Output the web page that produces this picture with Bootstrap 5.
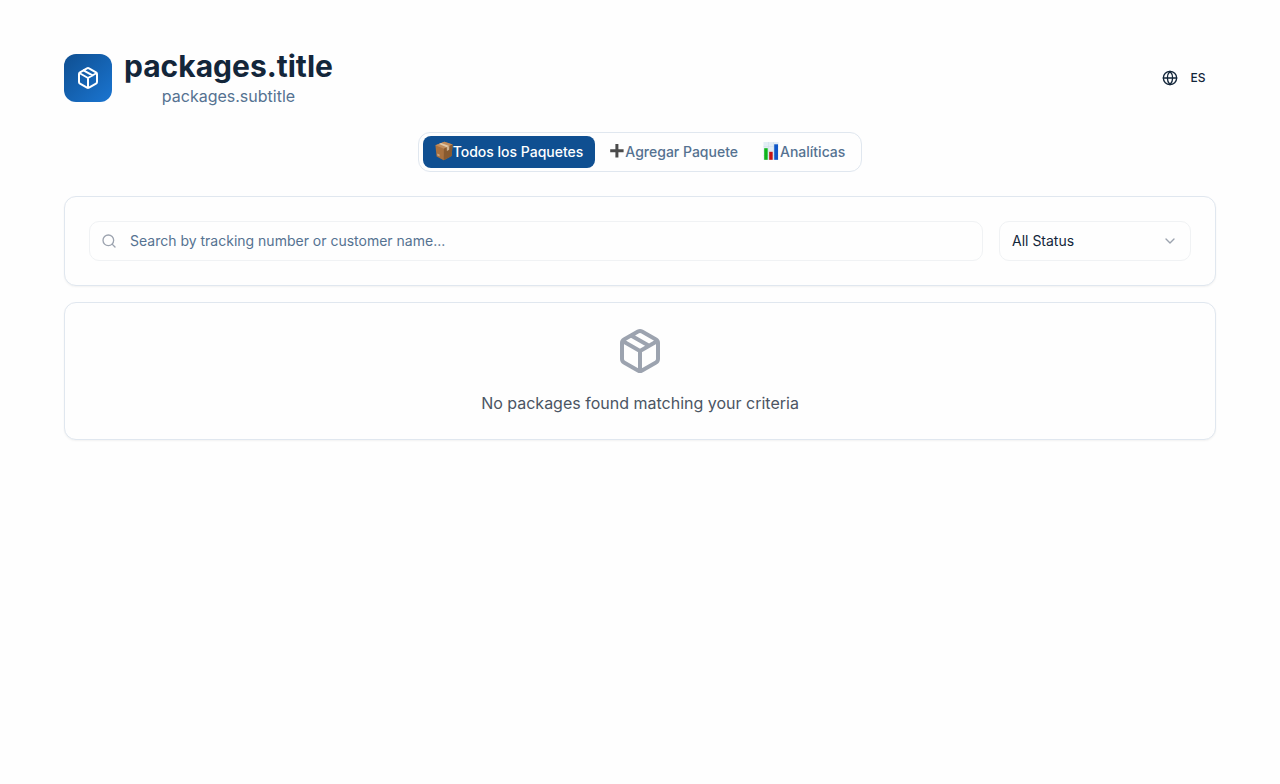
<!DOCTYPE html>
<html lang="es">
<head>
<meta charset="utf-8">
<meta name="viewport" content="width=device-width, initial-scale=1">
<title>packages.title</title>
<link href="https://cdn.jsdelivr.net/npm/bootstrap@5.3.0/dist/css/bootstrap.min.css" rel="stylesheet">
<style>
body{font-family:Inter,sans-serif;background:#fefefe;color:#13263a}
svg{display:block;flex:none}
.line-icon{fill:none;stroke:currentColor;stroke-width:2;stroke-linecap:round;stroke-linejoin:round}
.page{padding:48px 64px}
.brand{gap:12px}
.logo-tile{width:48px;height:48px;border-radius:12px;background:linear-gradient(135deg,#0f4f91,#1a75d1)}
.page-title{font-size:30px;line-height:36px;font-weight:700}
.subtitle{font-size:16px;line-height:24px;color:#557291}
.lang{font-size:12px;line-height:16px;font-weight:500;gap:12px;padding:8px 10.6px;color:#13263a;border:0}
.tabs{height:40px;padding:0 4px;border:1px solid #e0e7ef;border-radius:12px}
.tabs .nav-link{height:32px;padding:0 12px;border-radius:8px;font-size:14px;line-height:20px;font-weight:500;color:#557291}
.tabs .nav-link.active{background:#0f4f91;color:#fff}
.emoji{margin-top:-2px}
.panel{border:1px solid #e0e7ef;border-radius:12px;background:#fefefe;box-shadow:0 1px 2px rgba(0,0,0,.05);padding:24px}
.field{height:40px;border:1px solid #f0f2f4;border-radius:10px;font-size:14px;line-height:20px;padding:0 12px;background:#fefefe}
.field.search{gap:13px;padding-left:11px}
.field input{font-size:14px;line-height:20px;color:#13263a;outline:0}
.field input::placeholder{color:#557291;opacity:1}
.status{width:192px;color:#13263a}
.faint{color:#9ca3af}
.empty-text{font-size:16px;line-height:24px;color:#4b5563}
</style>
</head>
<body>
<svg width="0" height="0" class="position-absolute" aria-hidden="true">
  <symbol id="package" viewBox="0 0 24 24"><path d="m7.5 4.27 9 5.15M21 8a2 2 0 0 0-1-1.73l-7-4a2 2 0 0 0-2 0l-7 4A2 2 0 0 0 3 8v8a2 2 0 0 0 1 1.73l7 4a2 2 0 0 0 2 0l7-4A2 2 0 0 0 21 16ZM3.3 7l8.7 5 8.7-5M12 22V12"/></symbol>
</svg>
<main class="page">
  <header class="d-flex align-items-center justify-content-between">
    <div class="brand d-flex align-items-center">
      <div class="logo-tile d-flex align-items-center justify-content-center text-white"><svg class="line-icon" width="24" height="24"><use href="#package"/></svg></div>
      <div class="text-center">
        <h1 class="page-title mb-0">packages.title</h1>
        <p class="subtitle mb-0">packages.subtitle</p>
      </div>
    </div>
    <button class="lang btn d-flex align-items-center" type="button">
      <svg class="line-icon" width="16" height="16" viewBox="0 0 24 24"><circle cx="12" cy="12" r="10"/><path d="M12 2a14.5 14.5 0 0 0 0 20 14.5 14.5 0 0 0 0-20M2 12h20"/></svg>
      <span>ES</span>
    </button>
  </header>

  <div class="d-flex justify-content-center mt-4">
    <nav class="tabs nav d-inline-flex align-items-center flex-nowrap">
      <a class="nav-link active d-flex align-items-center" href="#">
        <svg class="emoji" width="18" height="20" viewBox="0 0 18 20"><path d="M.4 4.3 9.4.7l8.2 2.7-1 11.5-7.9 4.4-7.1-3.8z" fill="#a9713f"/><path d="m.4 4.3 9-3.6 8.2 2.7-8.7 4.3z" fill="#c08c5c"/><path d="m8.9 7.7 8.7-4.3-1 11.5-7.9 4.4z" fill="#885a30"/><path d="m4 2.9 2-.8 8.3 2.9-2.5 1.2z" fill="#e0c8a8"/><path d="m11.8 6.3 2.5-1.2-.1 3.7-2.3 1.2z" fill="#d0b594"/><path d="m2.2 12.5 2.4 1v1.9l-2.3-1z" fill="#c9a47c"/></svg><span>Todos los Paquetes</span>
      </a>
      <a class="nav-link d-flex align-items-center" href="#">
        <svg class="emoji" width="18" height="18" viewBox="0 0 18 18"><path d="M8.4 2h3v5.3h5.2v3h-5.2v5.2h-3v-5.2H3.2v-3h5.2z" fill="#4b4b4b"/></svg><span>Agregar Paquete</span>
      </a>
      <a class="nav-link d-flex align-items-center" href="#">
        <svg class="emoji" width="18" height="18" viewBox="0 0 18 18"><path d="M1.5 0h15v18h-15z" fill="#e3edf5"/><path d="M1.5 4.5h15M1.5 9h15M1.5 13.5h15M6.5 0v18M11.5 0v18" stroke="#cddce9" stroke-width=".5"/><path d="M2.2 6.2h3.5v11.6H2.2z" fill="#10b51c"/><path d="M7.2 9.8h3.5v8H7.2z" fill="#c51414"/><path d="M12.2 2.3h3.8v15.5h-3.8z" fill="#1057c8"/></svg><span>Analíticas</span>
      </a>
    </nav>
  </div>

  <section class="panel mt-4 d-flex gap-3">
    <label class="field search d-flex align-items-center flex-grow-1">
      <svg class="line-icon faint" width="16" height="16" viewBox="0 0 24 24"><circle cx="11" cy="11" r="8"/><path d="m21 21-4.3-4.3"/></svg>
      <input class="border-0 bg-transparent p-0 flex-grow-1" type="text" placeholder="Search by tracking number or customer name...">
    </label>
    <button class="field status d-flex align-items-center justify-content-between" type="button">
      <span>All Status</span>
      <svg class="line-icon faint" width="16" height="16" viewBox="0 0 24 24"><path d="m6 9 6 6 6-6"/></svg>
    </button>
  </section>

  <section class="panel mt-3 d-flex flex-column align-items-center">
    <svg class="line-icon faint mb-3" width="48" height="48"><use href="#package"/></svg>
    <p class="empty-text mb-0">No packages found matching your criteria</p>
  </section>
</main>
<script src="https://cdn.jsdelivr.net/npm/bootstrap@5.3.0/dist/js/bootstrap.bundle.min.js"></script>
</body>
</html>
